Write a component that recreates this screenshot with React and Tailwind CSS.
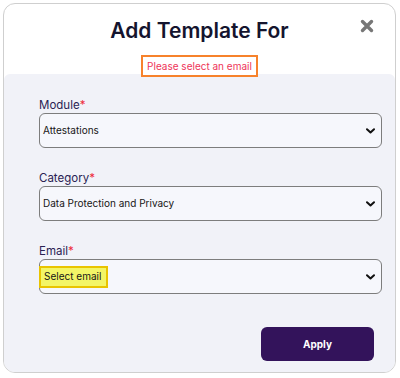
import React from 'react';

const Chevron = () => (
  <svg width="9" height="6" viewBox="0 0 9 6" className="shrink-0">
    <path d="M1 1.2 L4.5 4.5 L8 1.2" fill="none" stroke="#111" strokeWidth="2" strokeLinecap="round" strokeLinejoin="round" />
  </svg>
);

const Field = ({ label, children }) => (
  <div>
    <div className="text-[11.5px] leading-[14px] text-[#2a2253] mb-px">
      {label}<span className="text-[#ee2b3b]">*</span>
    </div>
    <div className="h-[35px] w-[343px] border border-[#7d7d7d] rounded-[6px] bg-[#f6f7fc] flex items-center justify-between pr-[6px] text-[10px] text-[#161616]">
      {children}
      <Chevron />
    </div>
  </div>
);

export default function App() {
  return (
    <div className="bg-white w-[400px] h-[378px] pt-[3px] pl-[3px]" style={{ fontFamily: 'Inter, "Noto Sans", sans-serif' }}>
      <div className="w-[393px] h-[370px] border border-[#cfcfcf] rounded-[12px] overflow-hidden bg-white flex flex-col">
        <div className="relative pt-[13px] flex flex-col items-center">
          <h1 className="text-[21px] leading-[28px] font-semibold text-[#14142e]">Add Template For</h1>
          <svg width="14" height="14" viewBox="0 0 14 14" className="absolute top-[15px] right-[21px]">
            <path d="M2.5 2.5 L11.5 11.5 M11.5 2.5 L2.5 11.5" stroke="#777" strokeWidth="3.4" strokeLinecap="round" />
          </svg>
          <div className="relative z-10 mt-[10px] h-[22px] px-[4px] border-2 border-[#f7822b] flex items-center text-[10px] text-[#ee3458] bg-white">
            Please select an email
          </div>
        </div>
        <div className="-mt-[3px] flex-1 bg-[#f1f2f8] rounded-t-[6px] pl-[35px] pr-[12px] pt-[24px] flex flex-col gap-[23px]">
          <Field label="Module">
            <span className="pl-[3px]">Attestations</span>
          </Field>
          <Field label="Category">
            <span className="pl-[3px]">Data Protection and Privacy</span>
          </Field>
          <Field label="Email">
            <span className="-ml-px h-[22px] flex items-center pl-[3px] pr-[5px] bg-[#f3f567] border-2 border-[#e9c400] text-[10px]">Select email</span>
          </Field>
          <div className="flex justify-end pr-[9px] mt-[10px]">
            <button className="w-[113px] h-[34px] rounded-[6px] bg-[#33135b] text-white text-[10px] font-bold">Apply</button>
          </div>
        </div>
      </div>
    </div>
  );
}
